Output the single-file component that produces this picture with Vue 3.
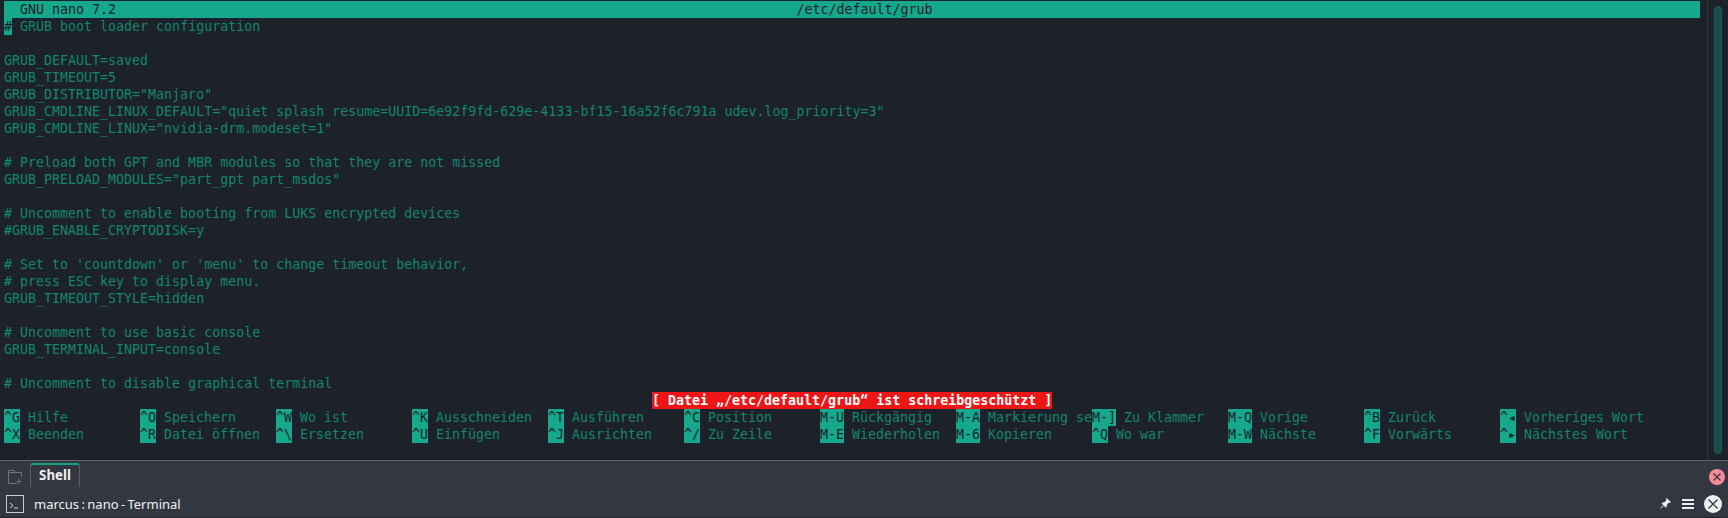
<script setup>
const titleText = '  GNU nano 7.2' + ' '.repeat(85) + '/etc/default/grub'
const lines = [
  { t: ' GRUB boot loader configuration', cursor: true },
  { t: '' },
  { t: 'GRUB_DEFAULT=saved' },
  { t: 'GRUB_TIMEOUT=5' },
  { t: 'GRUB_DISTRIBUTOR="Manjaro"' },
  { t: 'GRUB_CMDLINE_LINUX_DEFAULT="quiet splash resume=UUID=6e92f9fd-629e-4133-bf15-16a52f6c791a udev.log_priority=3"' },
  { t: 'GRUB_CMDLINE_LINUX="nvidia-drm.modeset=1"' },
  { t: '' },
  { t: '# Preload both GPT and MBR modules so that they are not missed' },
  { t: 'GRUB_PRELOAD_MODULES="part_gpt part_msdos"' },
  { t: '' },
  { t: '# Uncomment to enable booting from LUKS encrypted devices' },
  { t: '#GRUB_ENABLE_CRYPTODISK=y' },
  { t: '' },
  { t: "# Set to 'countdown' or 'menu' to change timeout behavior," },
  { t: '# press ESC key to display menu.' },
  { t: 'GRUB_TIMEOUT_STYLE=hidden' },
  { t: '' },
  { t: '# Uncomment to use basic console' },
  { t: 'GRUB_TERMINAL_INPUT=console' },
  { t: '' },
  { t: '# Uncomment to disable graphical terminal' },
]
const row1 = [['^G', 'Hilfe'], ['^O', 'Speichern'], ['^W', 'Wo ist'], ['^K', 'Ausschneiden'], ['^T', 'Ausführen'], ['^C', 'Position'], ['M-U', 'Rückgängig'], ['M-A', 'Markierung se'], ['M-]', 'Zu Klammer'], ['M-Q', 'Vorige'], ['^B', 'Zurück'], ['^◂', 'Vorheriges Wort']]
const row2 = [['^X', 'Beenden'], ['^R', 'Datei öffnen'], ['^\\', 'Ersetzen'], ['^U', 'Einfügen'], ['^J', 'Ausrichten'], ['^/', 'Zu Zeile'], ['M-E', 'Wiederholen'], ['M-6', 'Kopieren'], ['^Q', 'Wo war'], ['M-W', 'Nächste'], ['^F', 'Vorwärts'], ['^▸', 'Nächstes Wort']]
</script>

<template>
  <div class="app">
    <div class="term">
      <div class="screen">
        <div class="title">{{ titleText }}</div>
        <div v-for="(l, i) in lines" :key="i" class="row"><span v-if="l.cursor" class="key">#</span>{{ l.t }}</div>
        <div class="row status-row"><span class="status">[ Datei „/etc/default/grub“ ist schreibgeschützt ]</span></div>
        <div v-for="(r, ri) in [row1, row2]" :key="ri" class="row shortcuts">
          <div v-for="(s, si) in r" :key="si" class="cell"><span class="key">{{ s[0] }}</span>{{ ' ' + s[1] }}</div>
        </div>
      </div>
      <div class="scroll"><div class="thumb"></div></div>
    </div>
    <div class="panel">
      <div class="tabs">
        <svg class="newtab" width="16" height="16" viewBox="0 0 16 16" fill="none" stroke="#6f7479" stroke-width="1">
          <path d="M.5 14.5V1.5H6L7.5 3.5H13.5V8M.5 3.5H7.5M9 14.5H.5" />
          <path d="M11 10V15M8.5 12.5H13.5" />
        </svg>
        <div class="tab">Shell</div>
        <div class="spacer"></div>
        <svg class="close-red" width="16" height="16" viewBox="0 0 16 16">
          <circle cx="8" cy="8" r="8" fill="#f38c97" />
          <path d="M4.5 4.5L11.5 11.5M11.5 4.5L4.5 11.5" stroke="#33383f" stroke-width="1.2" />
        </svg>
      </div>
      <div class="taskbar">
        <svg class="appicon" width="18" height="18" viewBox="0 0 18 18" fill="none">
          <rect x=".5" y=".5" width="17" height="17" stroke="#c8cacc" />
          <path d="M4 8L7 10.5L4 13" stroke="#d5d6d8" stroke-width="1" />
          <path d="M8 13H12" stroke="#d5d6d8" stroke-width="1" />
        </svg>
        <span class="tasktitle">marcus : nano - Terminal</span>
        <div class="spacer"></div>
        <svg class="pin" width="12" height="12" viewBox="0 0 12 12" fill="#eceef0">
          <path d="M7.5 0L12 4L10.5 5L9.8 4.6L7.6 7.4L7.8 9L6.6 9.6L2.6 5.6L3.4 4.6L5 4.6L7.4 2.2L7 1Z" />
          <path d="M3.8 7.4L0.4 11.6L4.6 8.2Z" />
        </svg>
        <div class="burger"><i></i><i></i><i></i></div>
        <svg class="close-white" width="18" height="18" viewBox="0 0 18 18">
          <circle cx="9" cy="9" r="9" fill="#eceef0" />
          <path d="M4.5 4.5L13.5 13.5M13.5 4.5L4.5 13.5" stroke="#33383f" stroke-width="1.3" />
        </svg>
      </div>
    </div>
  </div>
</template>

<style scoped>
.app {
  width: 1728px;
  height: 518px;
  display: flex;
  flex-direction: column;
  overflow: hidden;
  background: #1d2129;
}
.term {
  height: 460px;
  display: flex;
  background: #1d2129;
}
.screen {
  width: 1707px;
  padding: 1px 7px 0 4px;
  box-sizing: border-box;
  font-family: "DejaVu Sans Mono", monospace;
  font-size: 13.3px;
  line-height: 17px;
  color: #12866f;
}
.row {
  height: 17px;
  white-space: pre;
}
.title {
  height: 17px;
  background: #16a88c;
  color: #1d2129;
  white-space: pre;
}
.key {
  background: #16a88c;
  color: #1d2129;
  display: inline-block;
  height: 17px;
  vertical-align: top;
}
.status-row {
  padding-left: 648px;
}
.status {
  display: inline-block;
  background: #ed1515;
  color: #fcfcfc;
  font-weight: 700;
  height: 17px;
  vertical-align: top;
}
.shortcuts {
  display: grid;
  grid-template-columns: repeat(12, 136px);
}
.cell {
  white-space: pre;
  height: 17px;
}
.scroll {
  width: 21px;
  border-left: 1px solid #31363b;
  box-sizing: border-box;
  padding: 6px 5px 6px 6px;
}
.thumb {
  width: 8px;
  height: 100%;
  box-sizing: border-box;
  background: #1a4b4a;
  border: 1px solid #14605a;
  border-radius: 4px;
}
.panel {
  height: 58px;
  background: #33373f;
  border-top: 1px solid #62666b;
  box-shadow: inset 0 -1px 0 #23262b;
  box-sizing: border-box;
  font-family: "Noto Sans", sans-serif;
  color: #eff0f1;
  display: flex;
  flex-direction: column;
}
.tabs {
  height: 27px;
  display: flex;
  align-items: flex-start;
  padding: 2px 3px 0 8px;
}
.newtab {
  margin: 6px 6px 0 0;
}
.tab {
  width: 50px;
  height: 24px;
  box-sizing: border-box;
  border: 1px solid #5b5f65;
  border-bottom: none;
  border-top: 2px solid #16a085;
  border-radius: 3px 3px 0 0;
  font-size: 13.3px;
  font-weight: 700;
  line-height: 20px;
  text-align: center;
}
.spacer { flex: 1; }
.close-red { margin-top: 6px; }
.taskbar {
  height: 30px;
  display: flex;
  align-items: center;
  padding: 0 6px 0 6px;
}
.appicon { margin-right: 10px; }
.tasktitle {
  font-size: 13px;
  word-spacing: -1px;
}
.pin { margin-right: 11px; }
.burger {
  width: 12px;
  display: flex;
  flex-direction: column;
  gap: 2px;
  margin-right: 10px;
}
.burger i {
  display: block;
  height: 2px;
  background: #eceef0;
}
</style>
